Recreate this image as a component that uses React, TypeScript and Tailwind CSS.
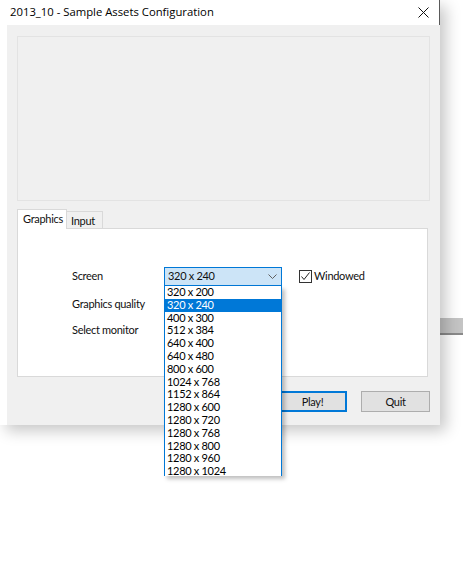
const resolutions = [
  "320 x 200",
  "320 x 240",
  "400 x 300",
  "512 x 384",
  "640 x 400",
  "640 x 480",
  "800 x 600",
  "1024 x 768",
  "1152 x 864",
  "1280 x 600",
  "1280 x 720",
  "1280 x 768",
  "1280 x 800",
  "1280 x 960",
  "1280 x 1024",
];

const Chevron = () => (
  <svg width="9" height="5" viewBox="0 0 9 5" className="text-[#606060]">
    <path d="M0.5 0.5 L4.5 4.5 L8.5 0.5" fill="none" stroke="currentColor" strokeWidth="1" />
  </svg>
);

const ResolutionList = () => (
  <div className="absolute left-0 top-full z-20 w-[118px] h-[190px] overflow-hidden bg-white border-x border-[#0078d7] shadow-[3px_3px_4px_rgba(0,0,0,0.25)]">
    {resolutions.map((r, i) => (
      <div
        key={r}
        className={
          i === 1
            ? "h-[12.8px] leading-[12.8px] pl-[2px] bg-[#0078d7] text-white"
            : "h-[12.8px] leading-[12.8px] pl-[2px] text-black"
        }
      >
        {r}
      </div>
    ))}
  </div>
);

// the value is left out of the boxes that the open list covers
const Combo = ({ value, open }: { value?: string; open?: boolean }) => (
  <div className="relative w-[118px] h-[19px]">
    <div
      className={
        open
          ? "flex items-center justify-between h-full pl-[3px] pr-[4px] bg-[#cce4f7] border border-[#0078d7]"
          : "flex items-center justify-between h-full pl-[3px] pr-[4px] bg-[#e1e1e1] border border-[#adadad]"
      }
    >
      <span>{value}</span>
      <Chevron />
    </div>
    {open && <ResolutionList />}
  </div>
);

export default function App() {
  return (
    <div className="relative w-[463px] h-[571px] overflow-hidden bg-white text-[11px] tracking-[-0.3px] text-[#111] font-['Lato',sans-serif]">
      {/* window peeking from behind */}
      <div className="absolute left-[440px] top-[318px] w-[23px] h-[17px] bg-[#c4c4c4] border-b-2 border-[#8a8a8a]" />

      <div className="relative z-10 w-[440px] flex flex-col shadow-[6px_6px_14px_rgba(0,0,0,0.22)]">
        {/* title bar */}
        <div className="h-[25px] flex items-center justify-between bg-white border-r border-[#5a5a5a] pl-[10px] pr-[10px]">
          <span className="text-[11.3px] tracking-normal text-black font-['Open_Sans',sans-serif]">2013_10 - Sample Assets Configuration</span>
          <svg width="11" height="11" viewBox="0 0 11 11">
            <path d="M0.5 0.5 L10.5 10.5 M10.5 0.5 L0.5 10.5" stroke="#111" strokeWidth="1" />
          </svg>
        </div>

        {/* body */}
        <div className="ml-[7px] h-[400px] bg-[#f0f0f0] px-[10px] pt-[11px] flex flex-col">
          <div className="h-[165px] border border-[#e3e3e3]" />

          {/* tabs */}
          <div className="mt-[8px] flex items-end h-[19px]">
            <div className="h-[20px] w-[50px] bg-white border border-b-0 border-[#d9d9d9] pl-[5px] leading-[18px] relative z-10 -mb-px">
              Graphics
            </div>
            <div className="h-[17px] w-[36px] bg-[#f0f0f0] border border-l-0 border-b-0 border-[#d9d9d9] pl-[4px] leading-[17px]">
              Input
            </div>
          </div>
          <div className="w-[411px] h-[149px] bg-white border border-[#d9d9d9] pt-[38px] pl-[54px] flex flex-col">
            <div className="flex items-center h-[19px]">
              <span className="w-[92px]">Screen</span>
              <Combo value="320 x 240" open />
              <div className="ml-[17px] flex items-center gap-[2px]">
                <div className="w-[13px] h-[13px] border border-[#333] bg-white flex items-center justify-center">
                  <svg width="11" height="11" viewBox="0 0 11 11">
                    <path d="M1.5 5.5 L4 8.5 L9.5 1.5" fill="none" stroke="#222" strokeWidth="1" />
                  </svg>
                </div>
                <span>Windowed</span>
              </div>
            </div>
            <div className="flex items-center h-[19px] mt-[9px]">
              <span className="w-[92px]">Graphics quality</span>
              <Combo />
            </div>
            <div className="flex items-center h-[19px] mt-[7px]">
              <span className="w-[92px]">Select monitor</span>
              <Combo />
            </div>
          </div>

          {/* buttons */}
          <div className="mt-[14px] flex justify-end gap-[14px]">
            <button className="w-[69px] h-[21px] bg-[#e1e1e1] border-2 border-[#0078d7] text-center leading-[17px]">
              Play!
            </button>
            <button className="w-[69px] h-[21px] bg-[#e1e1e1] border border-[#adadad] text-center leading-[19px]">
              Quit
            </button>
          </div>
        </div>
      </div>
    </div>
  );
}
